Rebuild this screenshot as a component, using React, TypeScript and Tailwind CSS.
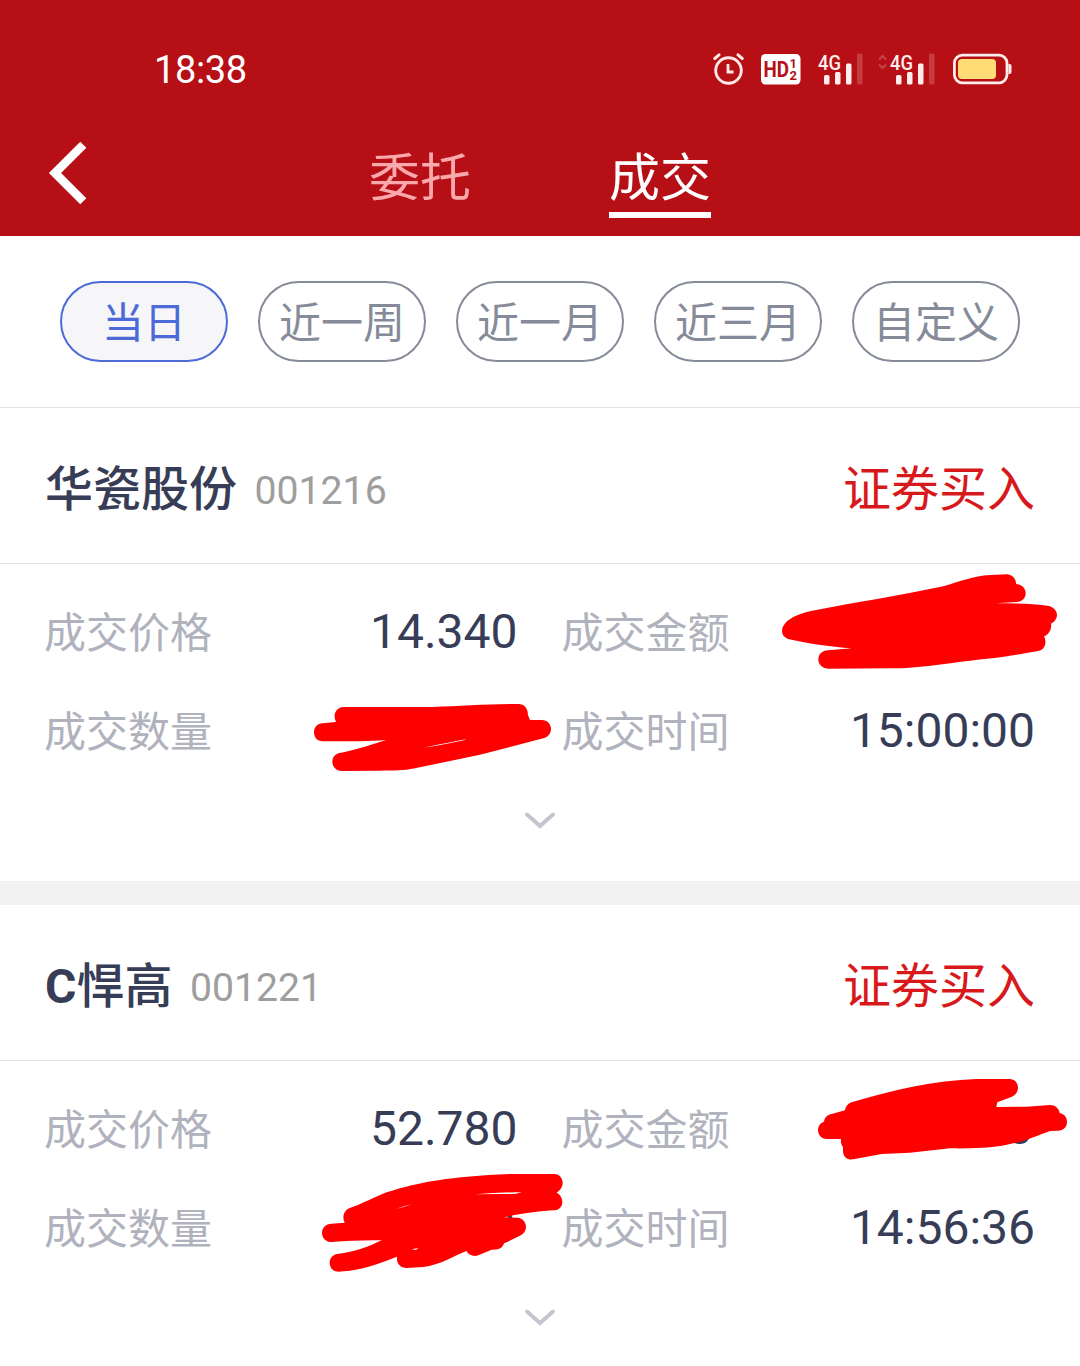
import type { ReactNode } from "react";

type Deal = {
  prefix?: string;
  name: string;
  code: string;
  side: string;
  price: string;
  amount: string;
  quantity: string;
  time: string;
};

const deals: Deal[] = [
  {
    name: "华瓷股份",
    code: "001216",
    side: "证券买入",
    price: "14.340",
    amount: "",
    quantity: "00",
    time: "15:00:00",
  },
  {
    prefix: "C",
    name: "悍高",
    code: "001221",
    side: "证券买入",
    price: "52.780",
    amount: "0",
    quantity: "0",
    time: "14:56:36",
  },
];

const ranges = ["当日", "近一周", "近一月", "近三月", "自定义"];

const pillClass =
  "flex h-[81px] w-[168px] items-center justify-center rounded-full border-2 pt-[5px] text-[42px] leading-none";

function AlarmIcon() {
  return (
    <svg width="32" height="34" viewBox="0 0 32 34" fill="none" stroke="#ffe9e6">
      <circle cx="15.5" cy="18.5" r="12.8" strokeWidth="2.9" />
      <path d="M15 12v8h5.500" strokeWidth="2.8" />
      <path d="M1.800 6.500 6 2.800M29.200 6.500 25 2.800" strokeWidth="3" strokeLinecap="round" />
    </svg>
  );
}

function HdIcon() {
  return (
    <svg width="40" height="31" viewBox="0 0 40 31" fontFamily="Roboto, sans-serif" fontWeight="700" fill="#b60f16">
      <rect x="0" y="0" width="39.5" height="30.5" rx="4.5" fill="#fff" />
      <text x="2.5" y="23" fontSize="22.5" textLength="25.5" lengthAdjust="spacingAndGlyphs">HD</text>
      <text x="28.5" y="14" fontSize="13">1</text>
      <text x="28.5" y="26" fontSize="13">2</text>
    </svg>
  );
}

function SignalIcon() {
  return (
    <svg className="overflow-visible" width="46" height="32" viewBox="0 0 46 32" fill="#ffeeec">
      <text x="0" y="17" fontFamily="Roboto, sans-serif" fontWeight="500" fontSize="20" textLength="23" lengthAdjust="spacingAndGlyphs">4G</text>
      <rect x="6" y="22" width="5.5" height="9.5" rx="1.5" />
      <rect x="17" y="19" width="5.5" height="12.5" rx="1.5" />
      <rect x="28" y="10.5" width="5.5" height="21" rx="1.5" />
      <rect x="39" y="0.500" width="5.5" height="31" rx="1.5" opacity="0.2" />
    </svg>
  );
}

function DataArrows() {
  return (
    <svg width="9" height="32" viewBox="0 0 9 32" fill="none" stroke="#fff" strokeWidth="2" opacity="0.22">
      <path d="m1 6.500 3.500-3.500L8 6.500M1 11.500 4.500 15 8 11.500" />
    </svg>
  );
}

function BatteryIcon() {
  return (
    <svg width="60" height="32" viewBox="0 0 60 32">
      <rect x="1.4" y="2.2" width="52.6" height="27.6" rx="8" fill="none" stroke="#ffeeec" strokeWidth="2.8" />
      <rect x="5" y="6" width="38" height="20" rx="4" fill="#ffdc76" />
      <path d="M55.500 11h1a2 2 0 0 1 2 2v6a2 2 0 0 1-2 2h-1z" fill="#ffeeec" />
    </svg>
  );
}

function StatusBar() {
  return (
    <div className="flex h-[138px] items-center justify-between pr-[67px] pl-[154px] text-white">
      <span className="pt-px text-[38px] leading-none tracking-[-0.4px]">18:38</span>
      <div className="flex items-center">
        <AlarmIcon />
        <span className="ml-4"><HdIcon /></span>
        <span className="ml-[17px]"><SignalIcon /></span>
        <span className="ml-3.5 flex gap-[3px]">
          <DataArrows />
          <SignalIcon />
        </span>
        <span className="ml-[17px]"><BatteryIcon /></span>
      </div>
    </div>
  );
}

function Header() {
  return (
    <header className="h-[236px] bg-[#b60f16]">
      <StatusBar />
      <nav className="flex h-[80px] items-stretch text-[51px] leading-none">
        <button type="button" className="flex w-[369px] items-start pl-[48px]">
          <svg width="40" height="70" viewBox="0 0 40 70" fill="none" stroke="#fff" strokeWidth="8.6">
            <path d="M35.300 6.700 7 35l28.300 28.300" />
          </svg>
        </button>
        <button type="button" className="w-[102px] border-b-[6px] border-transparent pt-1.5 text-[#f9a9ab]">委托</button>
        <button type="button" className="ml-[138px] w-[102px] border-b-[6px] border-white pt-1.5 text-white">成交</button>
      </nav>
    </header>
  );
}

function Field({ label, value, children }: { label: string; value: string; children?: ReactNode }) {
  return (
    <div className="relative flex h-[98.500px] items-center justify-between">
      <span className="pt-[3px] text-[42px] text-[#b0b2bd]">{label}</span>
      <span className={`text-[48px] text-[#383d57] ${children ? "pr-0.5 pb-0.5" : ""}`}>{value}</span>
      {children}
    </div>
  );
}

// marker strokes that hide the private numbers
const marks = [
  {
    amount: (
      <svg className="absolute top-[-23px] left-[198.500px]" width="320" height="120" viewBox="0 0 960 360" fill="#f00">
        <path d="M66 213C68 180 115 160 165 151C290 126 420 107 550 79C600 64 640 48 690 45L742 43Q766 46 769 72C790 75 797 88 797 100C797 116 785 126 770 126L708 130C760 130 820 130 868 138C884 144 891 155 891 166C890 178 882 187 873 191C876 208 866 224 852 229C860 243 858 268 835 273C770 284 730 292 680 296C560 309 480 325 390 325L204 326C186 325 175 313 175 298C175 283 186 272 204 271L275 265C210 260 140 250 84 237C72 232 66 224 66 213Z" />
      </svg>
    ),
    quantity: (
      <svg className="absolute top-[8.500px] left-[256px]" width="270" height="100" viewBox="0 0 810 300" fill="#f00" fillRule="evenodd">
        <path d="M130 51L400 51C480 48 570 42 655 42C674 42 684 56 684 76L690 90L726 90C742 90 753 103 753 117C753 130 744 141 730 145L540 194L345 235C310 243 280 241 240 242L126 243C108 243 97 230 97 215C97 200 108 189 124 188C170 180 215 163 258 151L180 154L68 154C52 154 42 142 42 127C42 112 52 100 68 100L108 96C98 76 106 53 130 51ZM372 173C420 163 470 153 516 145C470 156 420 166 372 173Z" />
      </svg>
    ),
  },
  {
    amount: (
      <svg className="absolute top-[-15px] left-[238.500px]" width="280" height="110" viewBox="0 0 840 330" fill="#f00">
        <path d="M160 110C280 75 400 46 530 42L628 42C645 42 654 55 654 68C654 80 646 90 636 95L592 112L589 126L680 125L750 120C765 120 777 130 779 144C793 147 801 157 801 170C801 186 790 197 774 197L750 198C710 212 680 228 640 235C590 248 540 251 450 250L330 263L245 267L160 283C142 286 129 275 129 257L129 246C123 240 122 230 123 222L80 222C65 222 54 210 54 195C54 183 62 173 72 170C74 156 84 149 95 147L135 136C137 122 146 113 160 110Z" />
      </svg>
    ),
    quantity: (
      <svg className="absolute top-[-18.500px] left-[266px]" width="270" height="120" viewBox="0 0 810 360" fill="#f00" fillRule="evenodd">
        <path d="M125 142C160 130 190 112 230 97C330 65 420 50 600 42L732 42C748 42 758 55 758 69C758 82 750 91 740 98C750 103 757 113 757 126C757 141 746 151 732 151C690 153 640 160 580 172L625 173C640 176 648 188 648 200C648 213 640 222 630 227L582 250C578 264 568 270 545 269L505 286C490 291 474 284 470 273C430 288 390 315 340 321L290 324C272 324 261 312 261 298L261 290C210 310 150 333 85 335C70 335 59 323 59 308C59 293 70 282 86 281C140 275 180 258 215 241C160 240 110 243 65 246C48 246 36 234 36 218C36 203 48 191 64 191L104 188C94 168 104 148 125 142ZM255 148Q280 138 306 133Q280 142 255 148ZM495 103Q570 96 635 97L615 102Q560 101 495 103ZM305 268L325 264L318 270Z" />
      </svg>
    ),
  },
];

function DealCard({ deal, index }: { deal: Deal; index: number }) {
  return (
    <section className="bg-white">
      <div className="flex h-[156px] items-center justify-between border-b border-[#e3e3e5] px-[45px] pt-2 text-[48px]">
        <div className="flex items-baseline">
          <h2 className="font-medium text-[#383d57]">
            {deal.prefix && <span className="font-bold">{deal.prefix}</span>}
            {deal.name}
          </h2>
          <span className="relative -top-0.5 ml-[17.500px] text-[39.200px] text-[#9e9e9e]">{deal.code}</span>
        </div>
        <span className="text-[#d8181a]">{deal.side}</span>
      </div>
      <div className="h-[317px] pt-[19px] pr-[45px] pl-[44px]">
        <div className="grid grid-cols-2 gap-x-[44px]">
          <Field label="成交价格" value={deal.price} />
          <Field label="成交金额" value={deal.amount}>{marks[index].amount}</Field>
          <Field label="成交数量" value={deal.quantity}>{marks[index].quantity}</Field>
          <Field label="成交时间" value={deal.time} />
        </div>
        <svg className="mx-auto mt-[30px]" width="32" height="20" viewBox="0 0 32 20" fill="none" stroke="#c4c5cf" strokeWidth="4" strokeLinecap="round">
          <path d="m3 4.500 13 11.500 13-11.500" />
        </svg>
      </div>
    </section>
  );
}

export default function App() {
  return (
    <main className="h-[1366px] w-[1080px] overflow-hidden bg-white font-[Roboto,'Noto_Sans_CJK_SC',sans-serif]">
      <Header />
      <div className="flex h-[172px] items-start justify-between border-b border-[#e3e3e5] px-[60px] pt-[45px]">
        {ranges.map((range, i) => (
          <button
            key={range}
            type="button"
            className={`${pillClass} ${
              i === 0
                ? "border-[#4c6bd8] bg-[#f6f6f8] text-[#4c6bd8]"
                : "border-[#868b99] bg-white text-[#868b99]"
            }`}
          >
            {range}
          </button>
        ))}
      </div>
      <div className="flex flex-col gap-6 bg-[#f2f2f2]">
        {deals.map((deal, i) => (
          <DealCard key={deal.code} deal={deal} index={i} />
        ))}
      </div>
    </main>
  );
}
